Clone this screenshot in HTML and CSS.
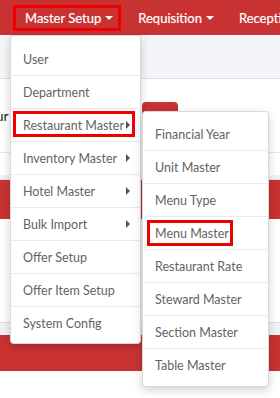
FILE: index.html
```html
<!DOCTYPE html>
<html lang="en">
<head>
    <meta charset="UTF-8">
    <meta name="viewport" content="width=device-width, initial-scale=1.0">
    <title>Master Setup</title>
    <link rel="stylesheet" href="styles.css">
</head>
<body>

    <nav class="navbar">
        <a class="nav-link marked">Master Setup <span class="caret"></span></a>
        <a class="nav-link">Requisition <span class="caret"></span></a>
        <a class="nav-link">Reception</a>
    </nav>

    <div class="page-header"></div>

    <div class="content">
        <div class="form-row">
            <span class="label">Restaur</span>
            <span class="btn-red"></span>
            <span class="btn-text">Sub</span>
        </div>
        <div class="table-head"></div>
        <div class="red-band"></div>
        <div class="table-body"></div>
        <div class="footer-line"></div>
        <div class="red-band bottom"></div>
    </div>

    <!-- main dropdown -->
    <div class="dropdown main-menu">
        <div class="item">User</div>
        <div class="item">Department</div>
        <div class="item sub mark mark-rest">Restaurant Master <span class="arrow"></span></div>
        <div class="item sub">Inventory Master <span class="arrow"></span></div>
        <div class="item sub">Hotel Master <span class="arrow"></span></div>
        <div class="item sub">Bulk Import <span class="arrow"></span></div>
        <div class="item">Offer Setup</div>
        <div class="item">Offer Item Setup</div>
        <div class="item last">System Config</div>
    </div>

    <!-- restaurant submenu -->
    <div class="dropdown sub-menu">
        <div class="item">Financial Year</div>
        <div class="item">Unit Master</div>
        <div class="item">Menu Type</div>
        <div class="item mark mark-menu">Menu Master</div>
        <div class="item">Restaurant Rate</div>
        <div class="item">Steward Master</div>
        <div class="item">Section Master</div>
        <div class="item last">Table Master</div>
    </div>

</body>
</html>
```

FILE: styles.css
```css
body {
    margin: 0;
    font-family: 'Lato', 'Open Sans', sans-serif;
    background: white;
    color: #212529;
    overflow: hidden;
}
.navbar {
    display: flex;
    align-items: center;
    gap: 5px;
    height: 35px;
    padding-left: 13px;
    background-color: #c93232;
    white-space: nowrap;
}
.nav-link {
    display: flex;
    align-items: center;
    height: 26px;
    padding: 0 8px 0 12px;
    color: white;
    font-size: 13px;
    font-weight: 400;
    -webkit-text-stroke: 0.2px white;
}
.nav-link.marked {
    outline: 3px solid #ee0000;
    outline-offset: -3px;
}
.caret {
    display: inline-block;
    margin-left: 4px;
    border-top: 4px solid white;
    border-left: 4px solid transparent;
    border-right: 4px solid transparent;
}
.page-header {
    height: 43px;
    background-color: #f4f5f8;
    border-bottom: 1px solid #dee2e6;
}
.content {
    padding-top: 23px;
}
.form-row {
    display: flex;
    align-items: flex-start;
    height: 50px;
    margin-left: -38px;
    font-size: 14px;
}
.label {
    padding-top: 5px;
    width: 180px;
}
.btn-red {
    width: 36px;
    height: 28px;
    background-color: #c93232;
    border-radius: 4px;
}
.btn-text {
    margin-left: 7px;
    padding-top: 6px;
}
.table-head {
    height: 26px;
    border-top: 1px solid #e4e6ea;
    border-bottom: 1px solid #dee2e6;
    background: linear-gradient(#fff 0, #fff 22px, #f1f2f5 22px);
}
.red-band {
    height: 39px;
    background-color: #c93232;
}
.table-body {
    height: 103px;
}
.footer-line {
    height: 12px;
    border-top: 1px solid #dcdfe3;
    background-color: #f1f2f5;
}
.red-band.bottom {
    height: 36px;
}

/* dropdowns */
.dropdown {
    position: absolute;
    background: white;
    border: 1px solid rgba(0, 0, 0, 0.15);
    border-radius: 4px;
    box-shadow: 0 3px 10px rgba(0, 0, 0, 0.18);
    font-size: 12.5px;
    color: #636363;
}
.main-menu {
    top: 35px;
    left: 10px;
    width: 129px;
    padding: 7px 0 4px;
}
.sub-menu {
    top: 111px;
    left: 142px;
    width: 125px;
    padding: 6px 0 5px;
}
.item {
    display: flex;
    align-items: center;
    justify-content: space-between;
    height: 32px;
    padding: 0 10px 0 12px;
    border-bottom: 1px solid #e9ecef;
    white-space: nowrap;
}
.item.last {
    border-bottom: none;
}
.arrow {
    border-left: 4px solid #555;
    border-top: 4px solid transparent;
    border-bottom: 4px solid transparent;
}
.mark {
    position: relative;
}
.mark::after {
    content: "";
    position: absolute;
    border: 3px solid #ee0000;
}
.mark-rest::after {
    top: 2px;
    left: 2px;
    right: 5px;
    bottom: 4px;
}
.mark-menu::after {
    top: 3px;
    left: 4px;
    right: 35px;
    bottom: 3px;
}
```
